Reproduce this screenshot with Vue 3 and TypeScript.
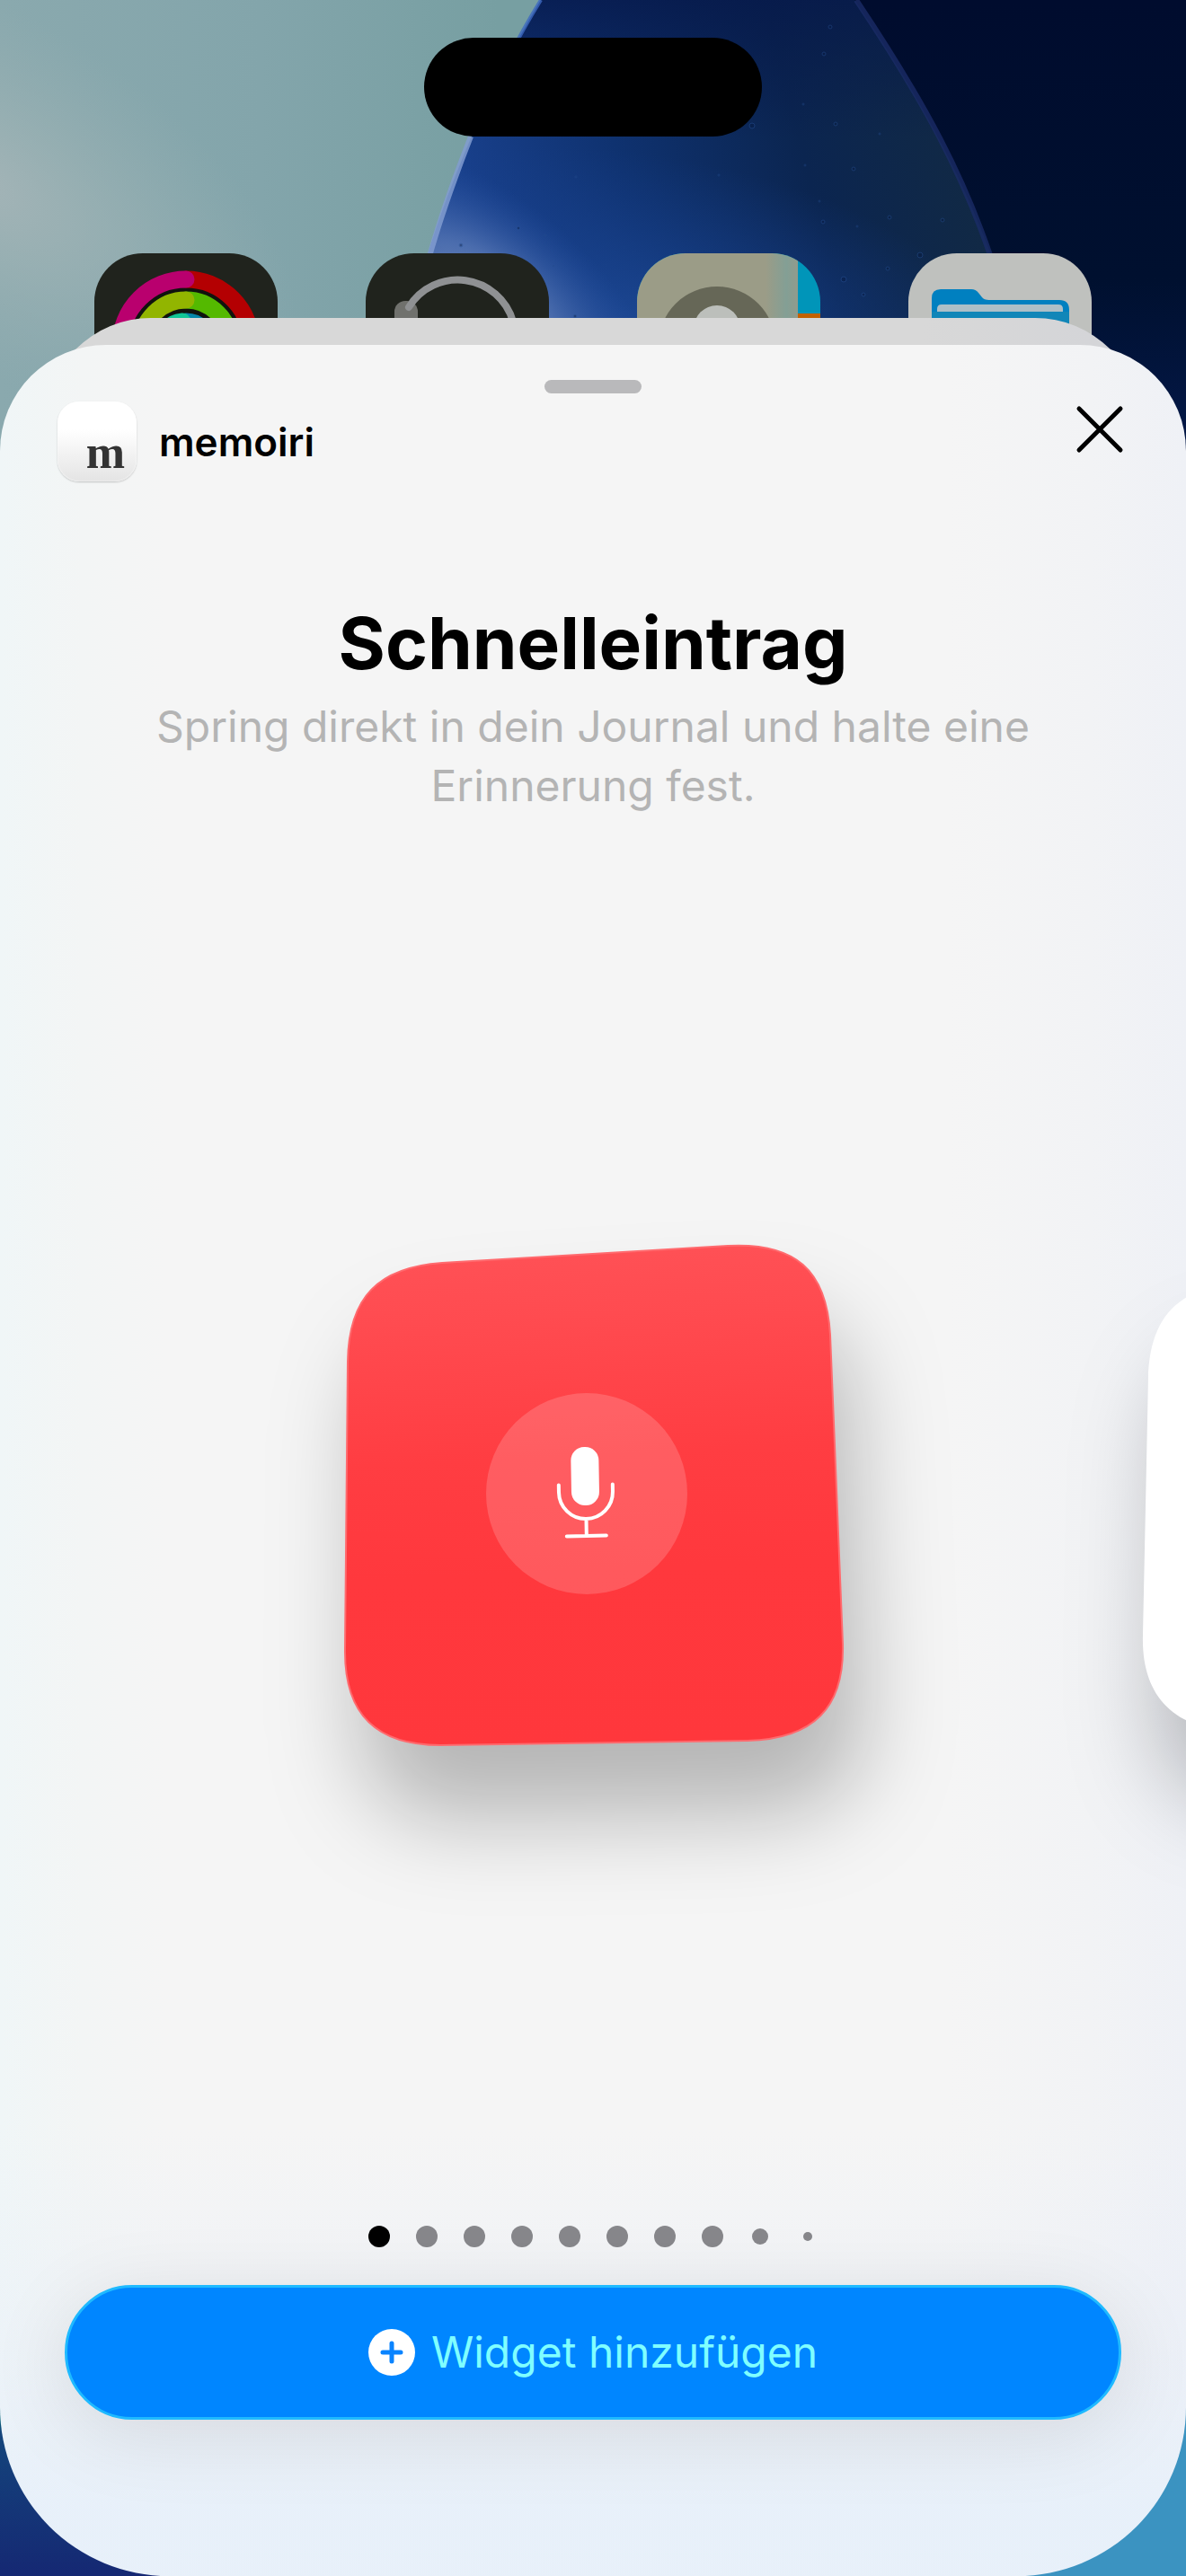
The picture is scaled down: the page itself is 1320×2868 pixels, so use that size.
<script setup lang="ts">
interface Dot {
  id: number
  size: 'full' | 'medium' | 'small'
}

interface Speck {
  x: number
  y: number
  r: number
}

const dots: Dot[] = Array.from({ length: 10 }, (_, i) => ({
  id: i + 1,
  size: i === 8 ? 'medium' : i === 9 ? 'small' : 'full',
}))

const specks: Speck[] = [
  { x: 924, y: 30, r: 2 }, { x: 917, y: 60, r: 2 }, { x: 894, y: 116, r: 1 },
  { x: 837, y: 140, r: 3 }, { x: 930, y: 138, r: 2 }, { x: 979, y: 149, r: 1 },
  { x: 950, y: 188, r: 2 }, { x: 896, y: 184, r: 1 }, { x: 800, y: 195, r: 1 },
  { x: 912, y: 224, r: 1 }, { x: 916, y: 247, r: 2 }, { x: 990, y: 242, r: 2 },
  { x: 954, y: 252, r: 1 }, { x: 1049, y: 245, r: 2 }, { x: 1024, y: 284, r: 3 },
  { x: 988, y: 299, r: 2 }, { x: 939, y: 311, r: 3 }, { x: 961, y: 328, r: 2 },
  { x: 577, y: 254, r: 2 }, { x: 513, y: 273, r: 2 }, { x: 607, y: 262, r: 1 },
  { x: 616, y: 296, r: 1 }, { x: 641, y: 197, r: 1 }, { x: 640, y: 352, r: 2 },
]
</script>

<template>
  <main class="screen">
    <svg class="wallpaper" viewBox="0 0 1320 620" preserveAspectRatio="xMidYMin slice" aria-hidden="true">
      <defs>
        <linearGradient id="sky" x1="0" y1="0" x2="1" y2="0">
          <stop offset="0" stop-color="#8aa9ae" />
          <stop offset="0.22" stop-color="#83a5ab" />
          <stop offset="0.42" stop-color="#779fa2" />
        </linearGradient>
        <radialGradient id="haze" gradientUnits="userSpaceOnUse" cx="0" cy="0" r="1" gradientTransform="translate(-30 200) rotate(30) scale(400 190)">
          <stop offset="0" stop-color="#a4b4b7" />
          <stop offset="0.4" stop-color="#9fb3b5" stop-opacity="0.6" />
          <stop offset="1" stop-color="#97afb2" stop-opacity="0" />
        </radialGradient>
        <linearGradient id="night" x1="0" y1="0" x2="0" y2="1">
          <stop offset="0" stop-color="#000c2e" />
          <stop offset="0.5" stop-color="#00102f" />
          <stop offset="0.9" stop-color="#051b50" />
        </linearGradient>
        <linearGradient id="petal" gradientUnits="userSpaceOnUse" x1="500" y1="260" x2="1060" y2="120">
          <stop offset="0" stop-color="#1a4290" />
          <stop offset="0.35" stop-color="#0f3270" />
          <stop offset="0.7" stop-color="#0b2550" />
          <stop offset="1" stop-color="#112945" />
        </linearGradient>
        <linearGradient id="petal-top" x1="0" y1="0" x2="0" y2="1">
          <stop offset="0" stop-color="#06184a" stop-opacity="0.75" />
          <stop offset="0.35" stop-color="#06184a" stop-opacity="0" />
        </linearGradient>
        <radialGradient id="glow-wide" gradientUnits="userSpaceOnUse" cx="0" cy="0" r="1" gradientTransform="translate(700 350) rotate(8) scale(420 180)">
          <stop offset="0" stop-color="#1c4793" stop-opacity="0.9" />
          <stop offset="1" stop-color="#163f8c" stop-opacity="0" />
        </radialGradient>
        <radialGradient id="glow" gradientUnits="userSpaceOnUse" cx="0" cy="0" r="1" gradientTransform="translate(540 340) rotate(40) scale(240 120)">
          <stop offset="0" stop-color="#7890bf" />
          <stop offset="0.4" stop-color="#5777b5" stop-opacity="0.8" />
          <stop offset="1" stop-color="#2650a0" stop-opacity="0" />
        </radialGradient>
      </defs>
      <rect width="1320" height="620" fill="url(#sky)" />
      <rect width="500" height="620" fill="url(#haze)" />
      <path d="M760 0H1320V620H900Z" fill="url(#night)" />
      <path d="M602 0C545 95 492 215 456 354L440 440H1150C1110 270 1052 150 951 0Z" fill="url(#petal)" />
      <path d="M602 0C545 95 492 215 456 354L440 440H1150C1110 270 1052 150 951 0Z" fill="url(#petal-top)" />
      <path d="M602 0C545 95 492 215 456 354L440 440H1150C1110 270 1052 150 951 0Z" fill="url(#glow-wide)" />
      <path d="M602 0C545 95 492 215 456 354L440 440H1150C1110 270 1052 150 951 0Z" fill="url(#glow)" />
      <path d="M602 0C576 42 552 90 531 140" fill="none" stroke="#3c68c0" stroke-width="4" opacity="0.8" />
      <path d="M524 152C502 208 487 252 475 296" fill="none" stroke="#819cd0" stroke-width="6" opacity="0.85" />
      <path d="M953 0C1030 115 1073 197 1104 290" fill="none" stroke="#1a2c66" stroke-width="6" opacity="0.8" />
      <circle v-for="(s, i) in specks" :key="i" :cx="s.x" :cy="s.y" :r="s.r" fill="#06193f" stroke="#2b579f" stroke-width="1" opacity="0.4" />
    </svg>

    <div class="island"></div>

    <div class="apps" aria-hidden="true">
      <svg class="app" viewBox="0 0 204 204">
        <rect width="204" height="204" fill="#20231d" />
        <circle cx="102" cy="102" r="73" fill="#10130e" />
        <g fill="none" stroke-width="19" stroke-linecap="round">
          <path d="M102 29A73 73 0 0 1 102 175" stroke="#b40002" />
          <path d="M102 175A73 73 0 0 1 102 29" stroke="#b9006e" />
          <path d="M102 52A50 50 0 0 1 102 152" stroke="#54b900" />
          <path d="M102 152A50 50 0 0 1 102 52" stroke="#92b500" />
          <path d="M102 76A26 26 0 0 1 102 128" stroke="#0585a8" />
          <path d="M102 128A26 26 0 0 1 98 76" stroke="#11c596" />
        </g>
      </svg>
      <svg class="app" viewBox="0 0 204 204">
        <rect width="204" height="204" fill="#20231d" />
        <rect x="32" y="53" width="26" height="70" rx="12" fill="#70716d" />
        <path d="M48 60A64 64 0 0 1 164 76L168 100" fill="none" stroke="#8f9193" stroke-width="8" stroke-linecap="round" />
      </svg>
      <svg class="app" viewBox="0 0 204 204">
        <defs>
          <linearGradient id="card" x1="0" y1="0" x2="1" y2="0">
            <stop offset="0.8" stop-color="#9b9c87" />
            <stop offset="0.93" stop-color="#839f95" />
            <stop offset="1" stop-color="#929b8c" />
          </linearGradient>
        </defs>
        <rect width="204" height="204" fill="#0095b9" />
        <rect x="179" y="67" width="25" height="93" fill="#c26100" />
        <rect width="179" height="204" fill="url(#card)" />
        <circle cx="89" cy="102" r="65" fill="#666757" />
        <circle cx="89" cy="84" r="26" fill="#bcbfbb" />
      </svg>
      <svg class="app" viewBox="0 0 204 204">
        <rect width="204" height="204" fill="#bfc1be" />
        <path d="M26 50Q26 40 36 40H70Q75 40 78 44L82 49Q84 52 90 52H168Q179 52 179 63V160H26Z" fill="#0080c0" />
        <path d="M32 65V62Q32 57 37 57H167Q172 57 172 62V65Z" fill="#adbfc7" />
        <path d="M26 65H179V160H26Z" fill="#1186b8" />
      </svg>
    </div>

    <div class="sheet-behind"></div>

    <section class="sheet">
      <div class="grabber"></div>

      <header class="bar">
        <div class="brand">
          <span class="brand-icon" aria-hidden="true">m</span>
          <span class="brand-name">memoiri</span>
        </div>
        <button class="close" type="button" aria-label="Schließen">
          <svg viewBox="0 0 54 54" width="54" height="54" aria-hidden="true">
            <path d="M4 4L50 50M50 4L4 50" fill="none" stroke="#000" stroke-width="5" stroke-linecap="round" />
          </svg>
        </button>
      </header>

      <h1 class="title">Schnelleintrag</h1>
      <p class="subtitle">Spring direkt in dein Journal und halte eine Erinnerung fest.</p>

      <ul class="carousel">
        <li class="slide">
          <svg class="widget" viewBox="0 0 560 564" role="img" aria-label="Schnelleintrag">
            <defs>
              <linearGradient id="red" x1="0.45" y1="0" x2="0.5" y2="1">
                <stop offset="0" stop-color="#ff5156" />
                <stop offset="0.14" stop-color="#ff4b50" />
                <stop offset="0.42" stop-color="#ff3d42" />
                <stop offset="0.65" stop-color="#ff383d" />
                <stop offset="1" stop-color="#ff373c" />
              </linearGradient>
            </defs>
            <path
              d="M7 136C8 64 41 31 112 26L430 7C505 3 540 34 544 106L558 450C560 522 525 556 452 558L110 563C40 563 3 530 4 456Z"
              fill="url(#red)" stroke="#ff6a6e" stroke-width="2" />
            <circle cx="273" cy="283" r="112" fill="#fff" fill-opacity="0.17" />
            <g transform="rotate(-1 272 283)">
              <rect x="256" y="231" width="31" height="65" rx="15" fill="#fff" />
              <path d="M242 273V281A30 30 0 0 0 302 281V273M272 311V330M250 330H294" fill="none" stroke="#fff" stroke-width="4" stroke-linecap="round" />
            </g>
          </svg>
        </li>
        <li class="slide">
          <svg class="widget" viewBox="0 0 560 564" aria-hidden="true">
            <path d="M6 154C8 86 40 52 108 50H560V548H106C34 546 -2 508 0 440Z" fill="#fff" />
          </svg>
        </li>
      </ul>

      <div class="dots">
        <span v-for="d in dots" :key="d.id" class="dot-slot">
          <span class="dot" :class="[d.size, { active: d.id === 1 }]"></span>
        </span>
      </div>

      <button class="add" type="button">
        <svg viewBox="0 0 52 52" width="52" height="52" aria-hidden="true">
          <circle cx="26" cy="26" r="26" fill="#fff" />
          <path d="M26 16V36M16 26H36" stroke="#0a84ff" stroke-width="5" stroke-linecap="round" />
        </svg>
        <span>Widget hinzufügen</span>
      </button>
    </section>
  </main>
</template>

<style>
body {
  margin: 0;
}
</style>

<style scoped>
.screen {
  position: relative;
  display: flex;
  flex-direction: column;
  min-height: 100vh;
  overflow: hidden;
  box-sizing: border-box;
  padding-top: 42px;
  font-family: Inter, "Liberation Sans", sans-serif;
  background:
    linear-gradient(to bottom, #006274 0, #006274 78%, #14457c 80%, #152873 100%) left bottom / 50% 800px no-repeat,
    #3b93c1;
}

.wallpaper {
  position: absolute;
  top: 0;
  left: 0;
  width: 100%;
  height: 620px;
}

.island {
  position: relative;
  align-self: center;
  width: 376px;
  height: 110px;
  border-radius: 55px;
  background: #000;
}

.apps {
  position: relative;
  display: flex;
  justify-content: space-between;
  margin: 130px 105px 0;
}

.app {
  width: 204px;
  height: 204px;
  border-radius: 54px;
}

.sheet-behind {
  position: relative;
  height: 160px;
  margin: -132px 50px 0;
  border-radius: 118px 118px 0 0;
  background: linear-gradient(to right, #d8d8d8 80%, #d3d4d8);
}

.sheet {
  position: relative;
  flex: 1;
  display: flex;
  flex-direction: column;
  margin-top: -130px;
  padding: 39px 0 174px;
  border-radius: 118px 118px 188px 188px;
  overflow: hidden;
  background:
    linear-gradient(to bottom, rgba(230, 240, 250, 0) 80%, rgba(231, 238, 249, 0.4) 90%, rgba(231, 240, 250, 0.95) 97%),
    linear-gradient(to right, #f0f6f7 0, #f3f5f5 7%, #f5f5f5 14%, #f5f5f5 80%, #f2f3f5 92%, #eff1f6 100%);
}

.grabber {
  align-self: center;
  width: 108px;
  height: 15px;
  border-radius: 8px;
  background: #b9b9bb;
}

.bar {
  display: flex;
  justify-content: space-between;
  align-items: flex-start;
  margin-top: 9px;
  padding: 0 69px 0 64px;
}

.brand {
  display: flex;
  align-items: center;
  gap: 25px;
}

.brand-icon {
  box-sizing: border-box;
  width: 88px;
  height: 89px;
  padding-right: 13px;
  border-radius: 24px;
  background: linear-gradient(to bottom, #fff 35%, #e4e4e4);
  box-shadow: 0 1px 2px rgba(0, 0, 0, 0.2), inset 0 0 2px #fff;
  color: #333;
  font-family: "Liberation Serif", serif;
  font-size: 52px;
  font-weight: 700;
  line-height: 114px;
  text-align: right;
}

.brand-name {
  font-size: 44px;
  font-weight: 600;
  line-height: 56px;
}

.close {
  margin: 4px 0 0;
  padding: 0;
  border: 0;
  background: none;
}

.close svg {
  display: block;
}

.title {
  margin: 132px 0 0;
  font-size: 80px;
  font-weight: 700;
  line-height: 96px;
  text-align: center;
}

.subtitle {
  margin: 12px 160px 0;
  color: #b4b4b4;
  font-size: 48px;
  line-height: 66px;
  text-align: center;
}

.carousel {
  flex: 1;
  display: flex;
  align-items: center;
  gap: 332px;
  margin: 0;
  padding: 0 0 62px calc(50% - 280px);
  list-style: none;
}

.slide {
  flex: none;
}

.widget {
  display: block;
  width: 560px;
  height: 564px;
  overflow: visible;
  filter: drop-shadow(20px 80px 50px rgba(0, 0, 0, 0.26));
}

.dots {
  display: flex;
  justify-content: center;
  gap: 29px;
}

.dot-slot {
  display: flex;
  align-items: center;
  justify-content: center;
  width: 24px;
  height: 24px;
}

.dot {
  border-radius: 50%;
  background: #87878b;
}

.dot.full {
  width: 24px;
  height: 24px;
}

.dot.medium {
  width: 18px;
  height: 18px;
}

.dot.small {
  width: 10px;
  height: 10px;
}

.dot.active {
  background: #000;
}

.add {
  display: flex;
  align-items: center;
  justify-content: center;
  gap: 18px;
  height: 150px;
  margin: 42px 72px 0;
  padding: 0;
  border: 3px solid #1fbaff;
  border-radius: 75px;
  background: #0086ff;
  box-shadow: 0 16px 90px rgba(0, 0, 0, 0.1);
  color: #7fffff;
  font-family: inherit;
  font-size: 48px;
  line-height: 60px;
}
</style>
